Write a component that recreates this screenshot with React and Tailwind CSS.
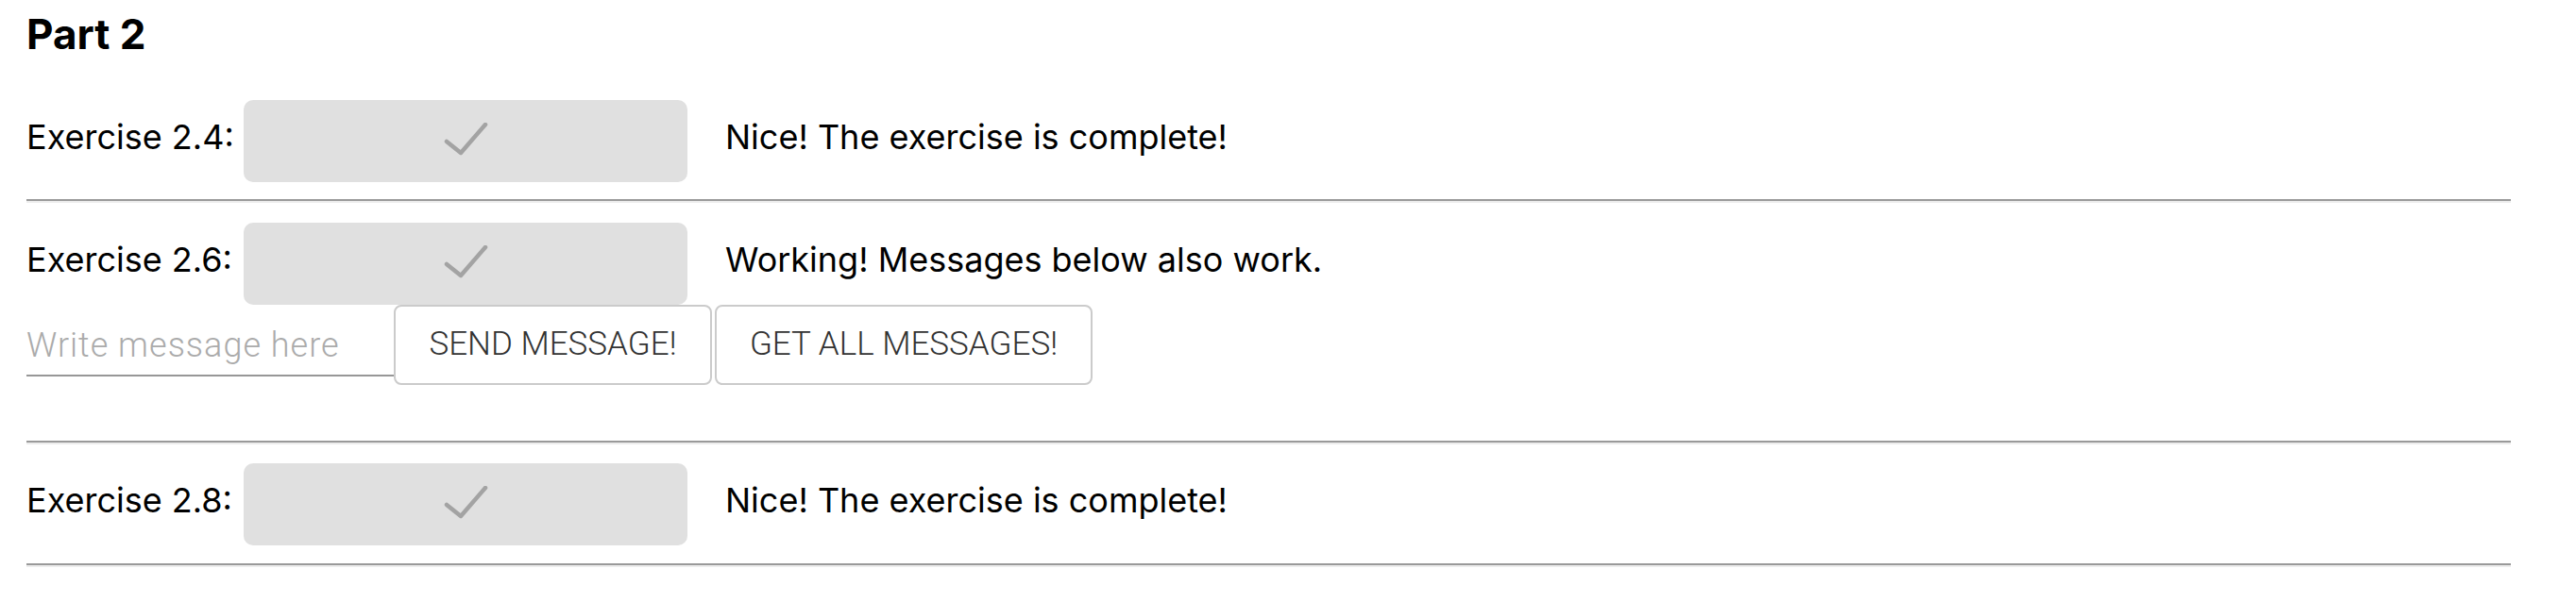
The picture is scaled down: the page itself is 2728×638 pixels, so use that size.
import React from "react";

function Check() {
  return (
    <svg width="48" height="40" viewBox="0 0 48 40" fill="none">
      <polyline points="4,20 19,32 45,2" stroke="#a3a3a3" strokeWidth="4.5" strokeLinecap="round" strokeLinejoin="round" />
    </svg>
  );
}

function DoneBox() {
  return (
    <div className="w-[470px] h-[87px] shrink-0 rounded-[10px] bg-[#e0e0e0] flex items-center justify-center">
      <Check />
    </div>
  );
}

function Row({ label, text }) {
  return (
    <div className="flex items-start">
      <div className="w-[230px] shrink-0 mt-[21px] leading-none whitespace-nowrap">{label}</div>
      <DoneBox />
      <div className="ml-[40px] mt-[21px] leading-none whitespace-nowrap">{text}</div>
    </div>
  );
}

function Rule({ className }) {
  return <div className={`border-t-2 border-b-2 border-t-[#9a9a9a] border-b-[#ededed] ${className}`} />;
}

export default function App() {
  return (
    <div className="min-h-screen bg-white text-black pl-[28px] pr-[69px] pt-[14px] text-[36px] font-['Inter','Liberation_Sans',sans-serif]">
      <h2 className="text-[44px] font-bold leading-none">Part 2</h2>

      {/* 2.4 */}
      <div className="mt-[48px]">
        <Row label="Exercise 2.4:" text="Nice! The exercise is complete!" />
      </div>
      <Rule className="mt-[18px]" />

      {/* 2.6 with messages */}
      <div className="mt-[21px]">
        <Row label="Exercise 2.6:" text="Working! Messages below also work." />
      </div>
      <div className="flex items-start font-['Roboto','Liberation_Sans',sans-serif] font-light">
        <input
          type="text"
          placeholder="Write message here"
          className="w-[389px] h-[76px] pt-[11px] border-b-2 border-[#979797] outline-none text-[36px] tracking-[1px] font-light placeholder:text-[#ababab] bg-transparent"
        />
        <button className="w-[337px] h-[85px] border-2 border-[#cbcbcb] rounded-[8px] bg-white text-[#333] text-[35px] uppercase flex items-center justify-center">
          Send message!
        </button>
        <button className="ml-[3px] w-[400px] h-[85px] border-2 border-[#cbcbcb] rounded-[8px] bg-white text-[#333] text-[35px] uppercase flex items-center justify-center">
          Get all messages!
        </button>
      </div>
      <Rule className="mt-[59px]" />

      {/* 2.8 */}
      <div className="mt-[20px]">
        <Row label="Exercise 2.8:" text="Nice! The exercise is complete!" />
      </div>
      <Rule className="mt-[19px]" />
    </div>
  );
}
